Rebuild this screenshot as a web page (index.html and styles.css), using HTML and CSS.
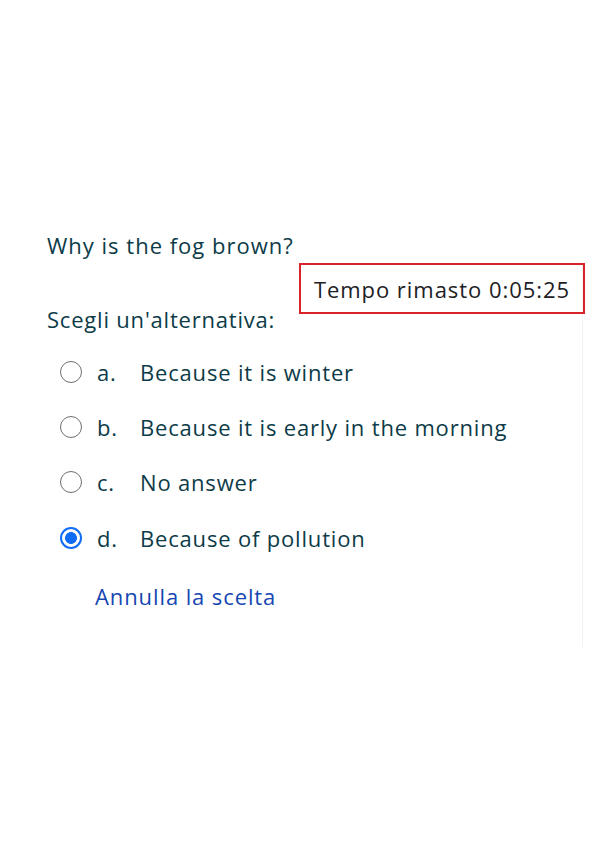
FILE: index.html
```html
<!DOCTYPE html>
<html lang="it">
<head>
<meta charset="utf-8">
<title>Quiz</title>
<link rel="stylesheet" href="styles.css">
</head>
<body>
<div class="page">
  <div class="question">Why is the fog brown?</div>
  <div class="qarea">
    <div class="prompt-row">
      <div class="prompt">Scegli un'alternativa:</div>
      <div class="timer">Tempo rimasto 0:05:25</div>
    </div>
    <div class="answers">
      <label class="opt"><span class="radio"></span><span class="letter">a.</span><span class="text">Because it is winter</span></label>
      <label class="opt"><span class="radio"></span><span class="letter">b.</span><span class="text">Because it is early in the morning</span></label>
      <label class="opt"><span class="radio"></span><span class="letter">c.</span><span class="text">No answer</span></label>
      <label class="opt"><span class="radio checked"></span><span class="letter">d.</span><span class="text">Because of pollution</span></label>
    </div>
    <a class="clear" href="#">Annulla la scelta</a>
  </div>
</div>
</body>
</html>
```
FILE: styles.css
```css
html, body {
  margin: 0;
  padding: 0;
  background: #ffffff;
}
body {
  font-family: "Open Sans", "Noto Sans", sans-serif;
  font-weight: 500;
  color: #0d3b48;
  letter-spacing: 1px;
}
.page {
  padding: 228px 0 0 47px;
}
.question {
  font-size: 22px;
  line-height: 34px;
}
.qarea {
  margin-right: 16px;
  border-right: 1px solid #f2f2f2;
  padding-bottom: 36px;
}
.prompt-row {
  display: flex;
  justify-content: space-between;
  align-items: flex-start;
}
.prompt {
  font-size: 22px;
  line-height: 34px;
  letter-spacing: 0.8px;
  margin-top: 40px;
}
.timer {
  margin-top: 1px;
  margin-right: -3px;
  border: 2px solid #d9232a;
  padding: 0 13px;
  height: 47px;
  display: flex;
  align-items: center;
  font-size: 22px;
  font-weight: 400;
  letter-spacing: 0.95px;
  color: #1d2125;
}
.answers {
  display: flex;
  flex-direction: column;
  padding-top: 8px;
}
.opt {
  display: flex;
  align-items: center;
  height: 55.3px;
  font-size: 22px;
  letter-spacing: 0.82px;
}
.radio {
  box-sizing: border-box;
  width: 22px;
  height: 22px;
  border: 1.6px solid #6f6f6f;
  border-radius: 50%;
  margin-left: 13px;
  margin-right: 15px;
  flex: none;
}
.radio.checked {
  border: 2.4px solid #0f6cf5;
  background: radial-gradient(circle, #0f6cf5 0 5.6px, #ffffff 6.2px);
}
.letter {
  width: 43px;
}
.clear {
  display: inline-block;
  margin-left: 48px;
  margin-top: 16px;
  font-size: 22px;
  letter-spacing: 0.9px;
  color: #1546b3;
  text-decoration: none;
}
```
